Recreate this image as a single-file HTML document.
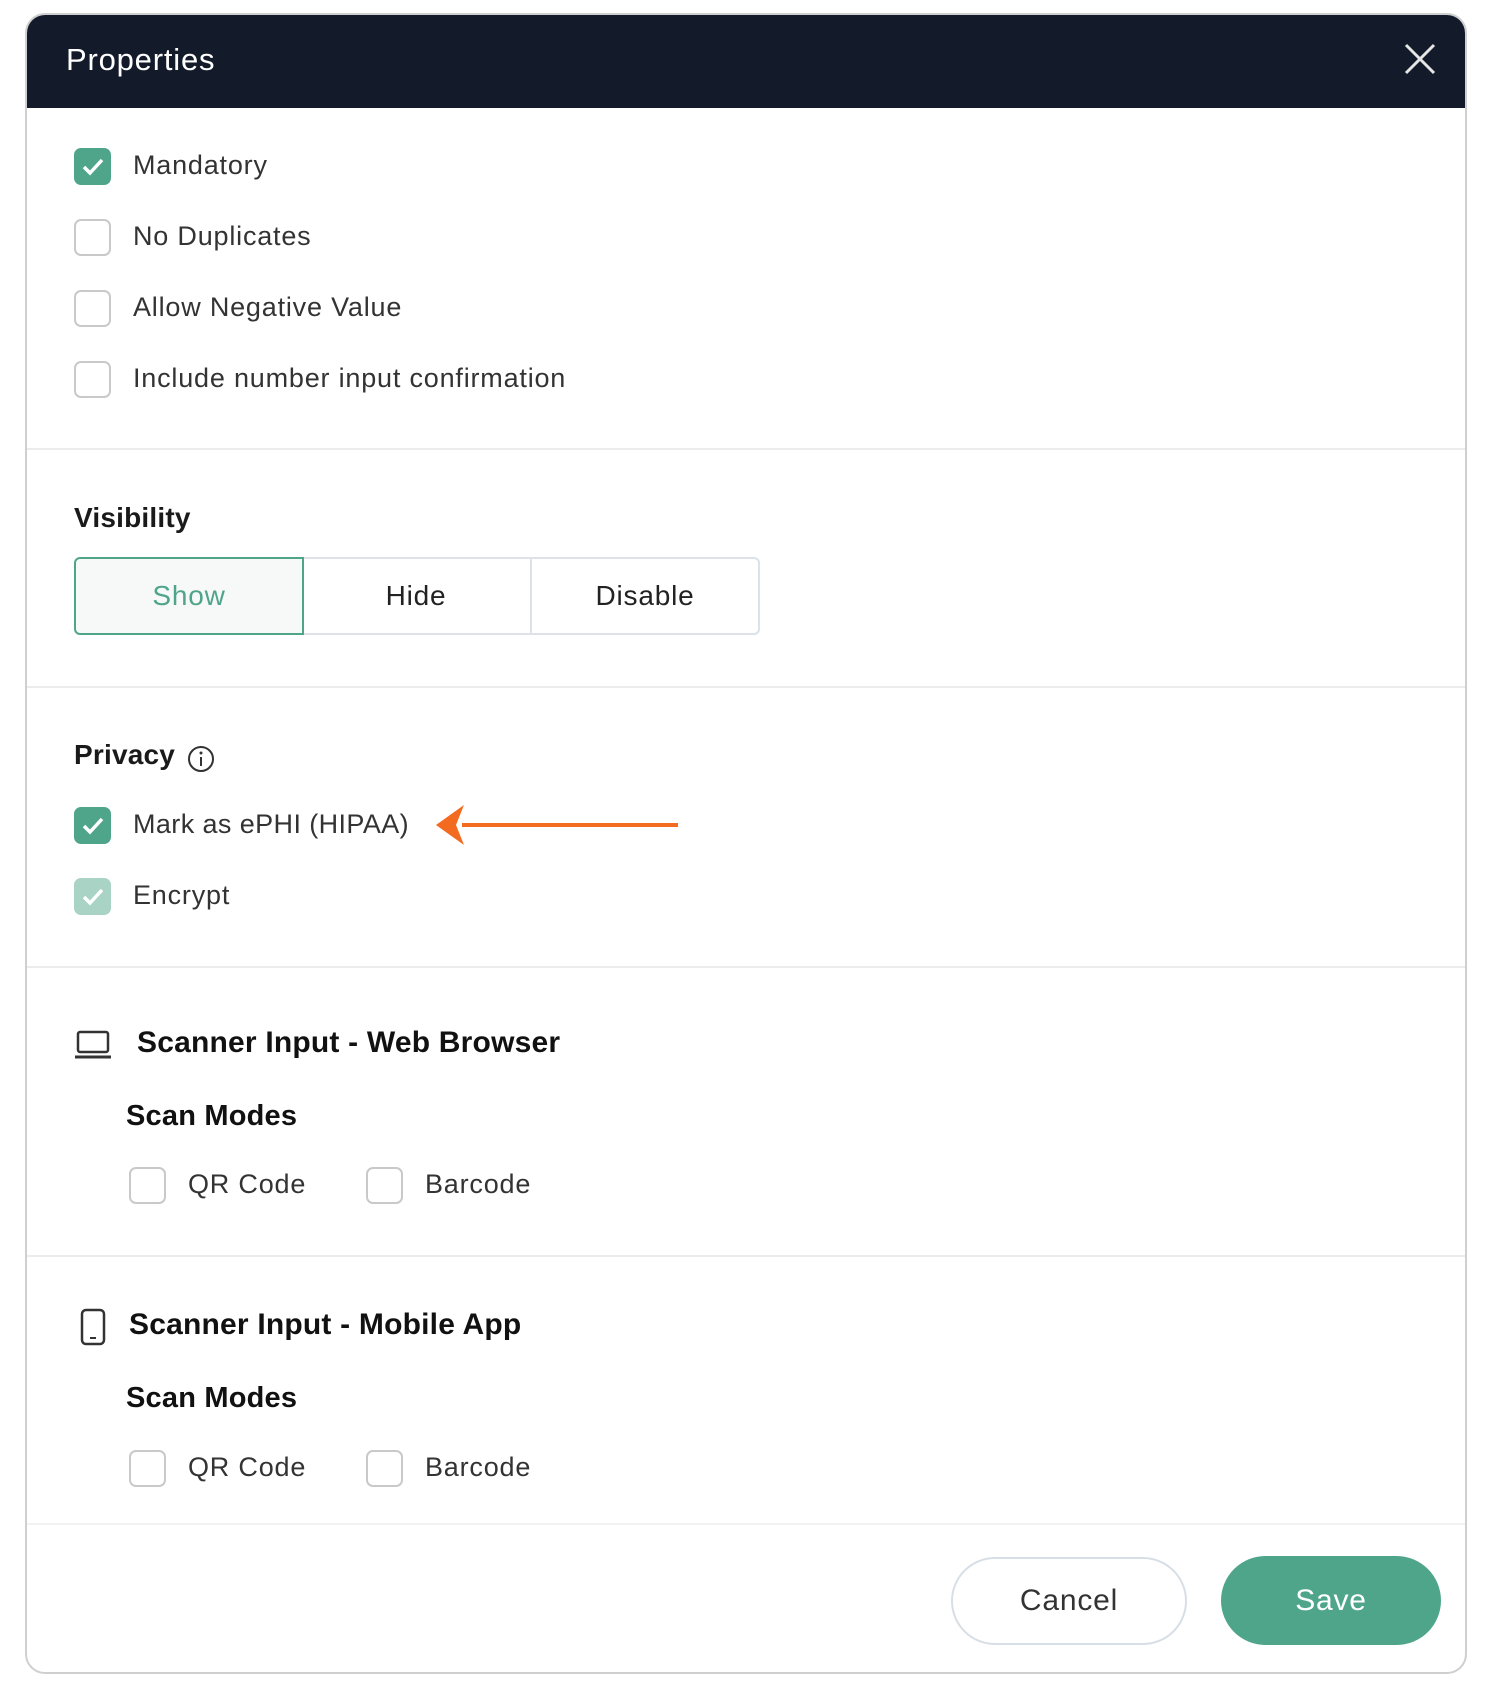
<!DOCTYPE html>
<html><head><meta charset="utf-8"><style>
*{box-sizing:border-box;margin:0;padding:0}
body{width:1503px;height:1685px;background:#fff;font-family:"Liberation Sans",sans-serif;position:relative;overflow:hidden}
.dlg{position:absolute;left:25px;top:13px;width:1442px;height:1661px;border:2px solid #cfcfcf;border-radius:20px;overflow:hidden;background:#fff}
.hdr{position:absolute;left:0;top:0;right:0;height:93px;background:#131b2b}
.hdr .t{position:absolute;left:39px;top:27px;color:#fff;font-size:31px;letter-spacing:0.8px}
.a{position:absolute}
.cb{position:absolute;width:37px;height:37px;border:2px solid #c9c9c9;border-radius:7px;background:#fff}
.cb.on{background:#4fa58a;border-color:#4fa58a}
.cb.dis{background:#a8d3c5;border-color:#a8d3c5}
.cb svg{position:absolute;left:6px;top:7px}
.lbl{position:absolute;font-size:27px;color:#333;white-space:nowrap;letter-spacing:0.8px}
.hd{position:absolute;font-size:28px;color:#1a1a1a;white-space:nowrap;font-weight:bold;letter-spacing:0.2px}
.div{position:absolute;left:0;right:0;height:2px;background:#ececec}
.seg{position:absolute;top:542px;height:78px;font-size:28px;display:flex;align-items:center;justify-content:center;color:#222;border:2px solid #dde2e8;letter-spacing:0.8px}
</style></head><body>
<div class="dlg">
<div class="hdr"><div class="t">Properties</div>
<svg class="a" style="left:1377px;top:28px" width="32" height="32" viewBox="0 0 32 32"><path d="M2 2L30 30M30 2L2 30" stroke="#e6e6e6" stroke-width="3"/></svg></div>

<div class="cb on" style="left:47px;top:133px"><svg width="22" height="20" viewBox="0 0 22 20"><path d="M2 10l6 6L20 3" stroke="#fff" stroke-width="3.5" fill="none"/></svg></div>
<div class="lbl" style="left:106px;top:135px">Mandatory</div>
<div class="cb" style="left:47px;top:204px"></div><div class="lbl" style="left:106px;top:206px">No Duplicates</div>
<div class="cb" style="left:47px;top:275px"></div><div class="lbl" style="left:106px;top:277px">Allow Negative Value</div>
<div class="cb" style="left:47px;top:346px"></div><div class="lbl" style="left:106px;top:348px">Include number input confirmation</div>
<div class="div" style="top:433px"></div>

<div class="hd" style="left:47px;top:487px">Visibility</div>
<div class="seg" style="left:47px;width:230px;border-color:#4fa58a;color:#4fa58a;background:#f7f8f8;border-radius:6px 0 0 6px;z-index:2">Show</div>
<div class="seg" style="left:275px;width:230px;border-left:none">Hide</div>
<div class="seg" style="left:503px;width:230px;border-radius:0 6px 6px 0">Disable</div>
<div class="div" style="top:671px"></div>

<div class="hd" style="left:47px;top:724px">Privacy</div>
<svg class="a" style="left:160px;top:730px" width="28" height="28" viewBox="0 0 28 28"><circle cx="14" cy="14" r="12" stroke="#333" stroke-width="2" fill="none"/><path d="M14 12v9" stroke="#333" stroke-width="2"/><circle cx="14" cy="8" r="1.5" fill="#333"/></svg>
<div class="cb on" style="left:47px;top:792px"><svg width="22" height="20" viewBox="0 0 22 20"><path d="M2 10l6 6L20 3" stroke="#fff" stroke-width="3.5" fill="none"/></svg></div>
<div class="lbl" style="left:106px;top:794px;letter-spacing:0.4px">Mark as ePHI (HIPAA)</div>
<svg class="a" style="left:407px;top:786px" width="250" height="50" viewBox="0 0 250 50"><path d="M28 24H244" stroke="#f26b21" stroke-width="4"/><path d="M2 24L30 4L22 24L30 44Z" fill="#f26b21"/></svg>
<div class="cb dis" style="left:47px;top:863px"><svg width="22" height="20" viewBox="0 0 22 20"><path d="M2 10l6 6L20 3" stroke="#fff" stroke-width="3.5" fill="none"/></svg></div>
<div class="lbl" style="left:106px;top:865px">Encrypt</div>
<div class="div" style="top:951px"></div>

<svg class="a" style="left:47px;top:1015px" width="38" height="30" viewBox="0 0 38 30"><rect x="4" y="2" width="30" height="20" rx="2" stroke="#333" stroke-width="2.5" fill="none"/><path d="M1 27H37" stroke="#333" stroke-width="3"/></svg>
<div class="hd" style="left:110px;top:1011px;font-size:30px;color:#111">Scanner Input - Web Browser</div>
<div class="hd" style="left:99px;top:1085px;font-size:29px;color:#111">Scan Modes</div>
<div class="cb" style="left:102px;top:1152px"></div><div class="lbl" style="left:161px;top:1154px">QR Code</div>
<div class="cb" style="left:339px;top:1152px"></div><div class="lbl" style="left:398px;top:1154px">Barcode</div>
<div class="div" style="top:1240px"></div>

<svg class="a" style="left:52px;top:1293px" width="28" height="38" viewBox="0 0 28 38"><rect x="3" y="2" width="22" height="34" rx="4" stroke="#333" stroke-width="2.5" fill="none"/><path d="M11 30H17" stroke="#333" stroke-width="2"/></svg>
<div class="hd" style="left:102px;top:1293px;font-size:30px;color:#111">Scanner Input - Mobile App</div>
<div class="hd" style="left:99px;top:1367px;font-size:29px;color:#111">Scan Modes</div>
<div class="cb" style="left:102px;top:1435px"></div><div class="lbl" style="left:161px;top:1437px">QR Code</div>
<div class="cb" style="left:339px;top:1435px"></div><div class="lbl" style="left:398px;top:1437px">Barcode</div>
<div class="div" style="top:1508px;background:#f2f2f2"></div>

<div class="a" style="left:924px;top:1542px;width:236px;height:88px;border:2px solid #d8dee6;border-radius:44px;font-size:30px;color:#333;display:flex;align-items:center;justify-content:center;letter-spacing:0.8px">Cancel</div>
<div class="a" style="left:1194px;top:1541px;width:220px;height:89px;background:#4fa58a;border-radius:45px;font-size:30px;color:#fff;display:flex;align-items:center;justify-content:center;letter-spacing:0.8px">Save</div>
</div>
</body></html>
